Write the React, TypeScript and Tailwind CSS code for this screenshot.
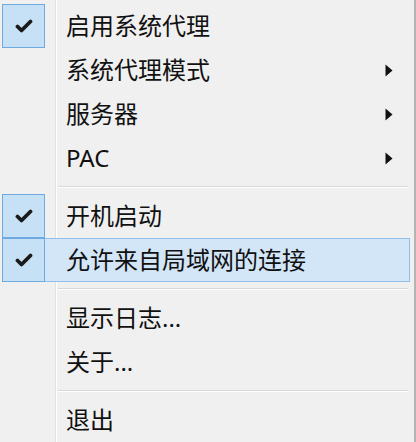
import { Fragment } from 'react';

type Item =
  | { kind: 'sep' }
  | { kind: 'item'; label: string; checked?: boolean; sub?: boolean; hot?: boolean };

const items: Item[] = [
  { kind: 'item', label: '启用系统代理', checked: true },
  { kind: 'item', label: '系统代理模式', sub: true },
  { kind: 'item', label: '服务器', sub: true },
  { kind: 'item', label: 'PAC', sub: true },
  { kind: 'sep' },
  { kind: 'item', label: '开机启动', checked: true },
  { kind: 'item', label: '允许来自局域网的连接', checked: true, hot: true },
  { kind: 'sep' },
  { kind: 'item', label: '显示日志...' },
  { kind: 'item', label: '关于...' },
  { kind: 'sep' },
  { kind: 'item', label: '退出' },
];

function Check() {
  return (
    <svg width="18" height="14" viewBox="0 0 18 14">
      <path d="M2.5 7.5 L6.5 11.5 L15.5 2.5" fill="none" stroke="#1a1a1a" strokeWidth="3.8" strokeLinecap="round" strokeLinejoin="round" />
    </svg>
  );
}

function Arrow() {
  return (
    <svg width="8" height="13" viewBox="0 0 8 13">
      <path d="M0.5 0.5 L7.5 6.5 L0.5 12.5 Z" fill="#111" />
    </svg>
  );
}

export default function App() {
  return (
    <div
      className="relative w-[416px] h-[442px] overflow-hidden bg-[#f0f0f0] border-r-2 border-[#b4b4b4] pt-[4px] pl-[2px] pr-[4px] text-[#111]"
      style={{ fontFamily: '"Noto Sans", "Noto Sans CJK SC", sans-serif' }}
    >
      {/* gutter divider */}
      <div className="absolute top-0 bottom-0 left-[55px] w-[1px] bg-[#e0e0e0]" />
      <div className="absolute top-0 bottom-0 left-[56px] w-[1px] bg-white" />

      <div className="relative flex flex-col">
        {items.map((it, i) => (
          <Fragment key={i}>
            {it.kind === 'sep' ? (
              <div className="h-[14px] flex items-center pl-[56px] pr-[2px]">
                <div className="w-full">
                  <div className="h-[1px] bg-[#d7d7d7]" />
                  <div className="h-[1px] bg-white" />
                </div>
              </div>
            ) : (
              <div
                className={`relative h-[44px] flex items-center ${
                  it.hot ? 'bg-[#d3e6f8] border border-[#94bfe9]' : 'border border-transparent'
                }`}
              >
                <div className="w-[43px] h-[44px] -my-[1px] -ml-[1px] flex items-center justify-center shrink-0">
                  {it.checked && (
                    <div className="w-[43px] h-[44px] flex items-center justify-center bg-[#c6e1f6] border border-[#6eaae0]">
                      <Check />
                    </div>
                  )}
                </div>
                <span className="ml-[21px] text-[24px] leading-none">{it.label}</span>
                {it.sub && (
                  <span className="ml-auto mr-[16px] flex items-center">
                    <Arrow />
                  </span>
                )}
              </div>
            )}
          </Fragment>
        ))}
      </div>
    </div>
  );
}
